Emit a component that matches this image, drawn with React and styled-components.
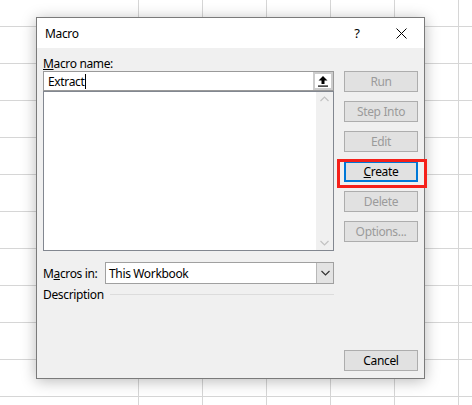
import React from "react";
import styled, { createGlobalStyle } from "styled-components";

const GlobalStyle = createGlobalStyle`
  html, body { margin: 0; padding: 0; background: #ffffff; }
  * { box-sizing: border-box; }
`;

const FONT = `"Noto Sans", "Open Sans", Arial, sans-serif`;

const Page = styled.div`
  width: 472px;
  height: 405px;
  overflow: hidden;
  padding: 17px 0 0 36px;
  font-family: ${FONT};
  font-size: 12px;
  letter-spacing: -0.35px;
  color: #000;
  background-color: #ffffff;
  background-image:
    linear-gradient(to bottom, #d6d6d6 1px, transparent 1px),
    linear-gradient(to right, #ffffff 137px, transparent 137px),
    linear-gradient(to right, #d6d6d6 1px, transparent 1px);
  background-size: 100% 37px, 100% 100%, 64px 100%;
  background-position: 0 26px, 0 0, 10px 0;
`;

const Dialog = styled.div`
  width: 389px;
  height: 362px;
  border: 1px solid #7a7a7a;
  background: #f0f0f0;
  display: flex;
  flex-direction: column;
  box-shadow: 0 2px 14px rgba(0, 0, 0, 0.28);
`;

const TitleBar = styled.div`
  height: 30px;
  background: #ffffff;
  display: flex;
  align-items: center;
  padding-left: 8px;
`;

const Title = styled.div`
  flex: 1;
  font-size: 12px;
`;

const TitleButton = styled.div`
  width: ${(p) => p.$w}px;
  height: 30px;
  display: flex;
  align-items: center;
  justify-content: center;
  font-size: 13px;
`;

const Body = styled.div`
  flex: 1;
  display: flex;
  gap: 10px;
  padding: 0 6px 7px 6px;
`;

const LeftCol = styled.div`
  width: 291px;
  display: flex;
  flex-direction: column;
`;

const RightCol = styled.div`
  width: 74px;
  display: flex;
  flex-direction: column;
  gap: 9px;
  padding-top: 23px;
`;

const FieldLabel = styled.div`
  margin-top: 8px;
  height: 15px;
  line-height: 15px;
`;

const NameField = styled.div`
  height: 20px;
  border: 1px solid #9a9a9a;
  background: #ffffff;
  display: flex;
  align-items: stretch;
`;

const NameText = styled.div`
  flex: 1;
  padding-left: 4px;
  display: flex;
  align-items: center;
`;

const Caret = styled.span`
  display: inline-block;
  width: 1px;
  height: 15px;
  background: #000;
  margin-left: 1px;
`;

const CollapseButton = styled.div`
  width: 20px;
  border: 2px solid #cccccc;
  background: #ffffff;
  display: flex;
  align-items: center;
  justify-content: center;
`;

const ListBox = styled.div`
  height: 160px;
  border: 1px solid #828790;
  background: #ffffff;
  display: flex;
`;

const ListArea = styled.div`
  flex: 1;
`;

const ScrollBar = styled.div`
  width: 17px;
  background: #f0f0f0;
  display: flex;
  flex-direction: column;
  justify-content: space-between;
  align-items: center;
  padding: 4px 0;
`;

const ComboRow = styled.div`
  margin-top: 11px;
  height: 22px;
  display: flex;
  align-items: center;
`;

const ComboLabel = styled.div`
  width: 62px;
`;

const Combo = styled.div`
  flex: 1;
  height: 22px;
  border: 1px solid #a0a0a0;
  background: #ffffff;
  display: flex;
`;

const ComboText = styled.div`
  flex: 1;
  padding-left: 3px;
  display: flex;
  align-items: center;
`;

const DropButton = styled.div`
  width: 17px;
  background: #e3e3e3;
  border-left: 1px solid #b8b8b8;
  display: flex;
  align-items: center;
  justify-content: center;
`;

const DescRow = styled.div`
  margin-top: 2px;
  height: 16px;
  display: flex;
  align-items: center;
`;

const DescLine = styled.div`
  flex: 1;
  height: 1px;
  background: #dcdcdc;
  margin-left: 6px;
`;

const Button = styled.div`
  height: 21px;
  border: ${(p) => (p.$focused ? "2px solid #0078d7" : "1px solid #adadad")};
  background: #e1e1e1;
  color: ${(p) => (p.$disabled ? "#9b9b9b" : "#000")};
  display: flex;
  align-items: center;
  justify-content: center;
  margin-top: ${(p) => (p.$bottom ? "auto" : "0")};
`;

const HighlightWrap = styled.div`
  position: relative;
`;

const Highlight = styled.div`
  position: absolute;
  top: -2px;
  left: -7px;
  right: -9px;
  bottom: -6px;
  border: 3px solid #f5201a;
  z-index: 2;
  pointer-events: none;
`;

const UpArrowIcon = () => (
  <svg width="12" height="12" viewBox="0 0 12 12">
    <path d="M6 1 L10.5 5.5 L7.5 5.5 L7.5 9 L4.5 9 L4.5 5.5 L1.5 5.5 Z" fill="#000" />
    <rect x="1" y="10.5" width="10" height="1.2" fill="#000" />
  </svg>
);

const Chevron = ({ up, color = "#c2c2c2" }) => (
  <svg width="9" height="6" viewBox="0 0 9 6">
    <path
      d={up ? "M0.5 5 L4.5 1 L8.5 5" : "M0.5 1 L4.5 5 L8.5 1"}
      fill="none"
      stroke={color}
      strokeWidth="1.2"
    />
  </svg>
);

const CloseIcon = () => (
  <svg width="11" height="11" viewBox="0 0 11 11">
    <path d="M0.5 0.5 L10.5 10.5 M10.5 0.5 L0.5 10.5" stroke="#000" strokeWidth="1" />
  </svg>
);

export default function App() {
  return (
    <>
      <GlobalStyle />
      <Page>
        <Dialog>
          <TitleBar>
            <Title>Macro</Title>
            <TitleButton $w={42}>?</TitleButton>
            <TitleButton $w={46}>
              <CloseIcon />
            </TitleButton>
          </TitleBar>
          <Body>
            <LeftCol>
              <FieldLabel>
                <u>M</u>acro name:
              </FieldLabel>
              <NameField>
                <NameText>
                  Extract
                  <Caret />
                </NameText>
                <CollapseButton>
                  <UpArrowIcon />
                </CollapseButton>
              </NameField>
              <ListBox>
                <ListArea />
                <ScrollBar>
                  <Chevron up />
                  <Chevron />
                </ScrollBar>
              </ListBox>
              <ComboRow>
                <ComboLabel>
                  M<u>a</u>cros in:
                </ComboLabel>
                <Combo>
                  <ComboText>This Workbook</ComboText>
                  <DropButton>
                    <Chevron color="#333" />
                  </DropButton>
                </Combo>
              </ComboRow>
              <DescRow>
                Description
                <DescLine />
              </DescRow>
            </LeftCol>
            <RightCol>
              <Button $disabled>Run</Button>
              <Button $disabled>Step Into</Button>
              <Button $disabled>Edit</Button>
              <HighlightWrap>
                <Button $focused>
                  <u>C</u>reate
                </Button>
                <Highlight />
              </HighlightWrap>
              <Button $disabled>Delete</Button>
              <Button $disabled>Options...</Button>
              <Button $bottom>Cancel</Button>
            </RightCol>
          </Body>
        </Dialog>
      </Page>
    </>
  );
}
